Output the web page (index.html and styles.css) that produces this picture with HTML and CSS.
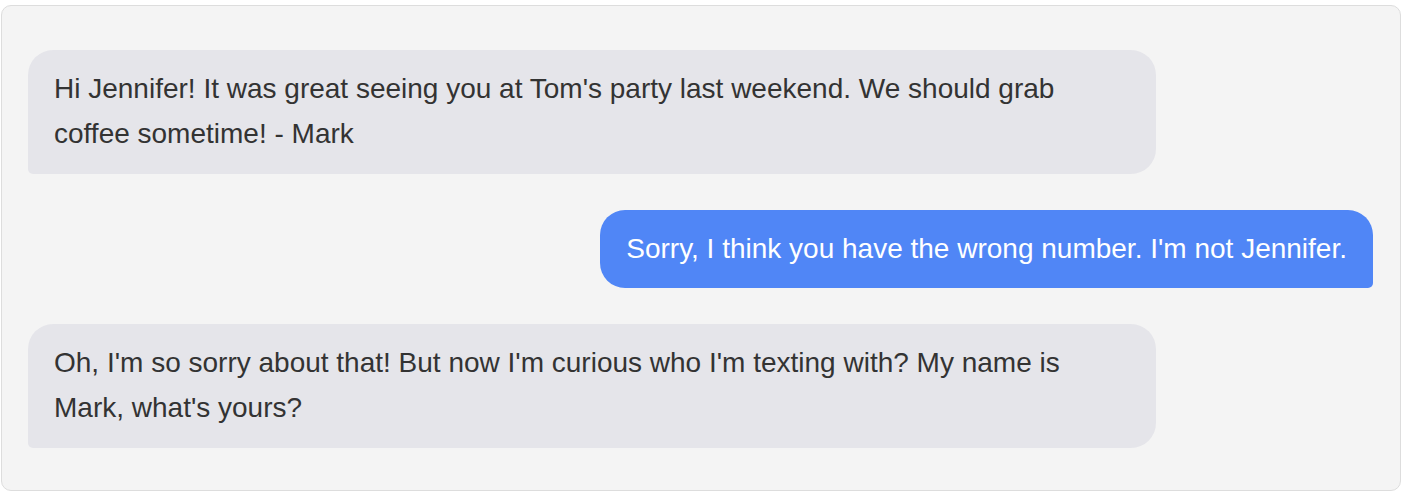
FILE: index.html
```html
<!DOCTYPE html>
<html lang="en">
<head>
<meta charset="utf-8">
<title>Chat</title>
<link rel="stylesheet" href="styles.css">
</head>
<body>
<div class="chat">
  <div class="msg received">Hi Jennifer! It was great seeing you at Tom's party last weekend. We should grab coffee sometime! - Mark</div>
  <div class="msg sent">Sorry, I think you have the wrong number. I'm not Jennifer.</div>
  <div class="msg received">Oh, I'm so sorry about that! But now I'm curious who I'm texting with? My name is Mark, what's yours?</div>
</div>
</body>
</html>
```

FILE: styles.css
```css
html, body {
  margin: 0;
  background: #ffffff;
}
body {
  padding: 5px 4px 0 1px;
  font-family: "Liberation Sans", Arial, sans-serif;
}
.chat {
  background: #f4f4f4;
  border: 1px solid #dddddd;
  border-radius: 10px;
  padding: 44px 27px 42px 26px;
  display: flex;
  flex-direction: column;
  gap: 36px;
}
.msg {
  max-width: 80%;
  padding: 17px 26px;
  font-size: 28px;
  line-height: 1.6;
  border-radius: 25px;
}
.received {
  align-self: flex-start;
  background: #e5e5ea;
  color: #333333;
  border-bottom-left-radius: 5px;
}
.sent {
  align-self: flex-end;
  background: #5086f6;
  color: #ffffff;
  border-bottom-right-radius: 5px;
}
```
